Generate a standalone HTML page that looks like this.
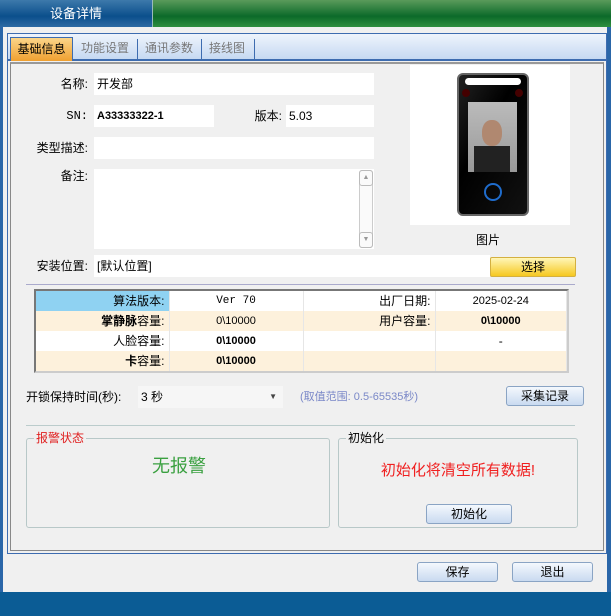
<!DOCTYPE html>
<html><head><meta charset="utf-8"><style>
*{box-sizing:border-box;margin:0;padding:0}
body{width:611px;height:616px;overflow:hidden;background:#f0f0f0;font-family:"Liberation Sans","Noto Sans CJK SC",sans-serif;font-size:12px;color:#000;position:relative}
.a{position:absolute}
.inp{position:absolute;background:#fff;height:22px;line-height:22px;padding-left:3px;font-size:12px}
.lbl{position:absolute;text-align:right;font-size:12px}
.btn{position:absolute;border:1px solid #8aa4c4;border-radius:3px;background:linear-gradient(#f4f8fd,#c9daf0);text-align:center;font-size:12px}
table{border-collapse:collapse;table-layout:fixed}
td{height:20px;line-height:18px;padding:0;vertical-align:middle;font-size:12px;border-right:1px solid #e6e6e6;overflow:hidden;white-space:nowrap}
</style></head><body>
<div class="a" style="left:0;top:0;width:611px;height:27px;background:linear-gradient(#5a9a5a,#0c6a2a 60%,#2f8f3f)"></div>
<div class="a" style="left:0;top:0;width:153px;height:27px;background:linear-gradient(#3d79ab,#0b4f8c 60%,#2d6aa4);color:#fff;font-size:13px;text-align:center;line-height:27px;border-right:1px solid #9bb">设备详情</div>
<div class="a" style="left:0;top:27px;width:3px;height:565px;background:#2a66a8"></div>
<div class="a" style="left:607px;top:27px;width:4px;height:565px;background:#2a66a8"></div>
<div class="a" style="left:0;top:592px;width:611px;height:24px;background:#0b5c95"></div>
<!-- tab panel -->
<div class="a" style="left:7px;top:33px;width:600px;height:521px;border:1px solid #3d6cb0;background:#f0f0f0"></div>
<div class="a" style="left:8px;top:34px;width:598px;height:27px;background:linear-gradient(#eef4fc,#c6d9f2);border-bottom:2px solid #3d6cb0"></div>
<div class="a" style="left:10px;top:37px;width:63px;height:24px;background:linear-gradient(#fbd58a,#f0a030);border:1px solid #3d6cb0;border-bottom:none;text-align:center;line-height:22px;font-size:12px">基础信息</div>
<div class="a" style="left:81px;top:37px;line-height:22px;color:#777">功能设置</div>
<div class="a" style="left:137px;top:39px;width:1px;height:20px;background:#3d6cb0"></div>
<div class="a" style="left:145px;top:37px;line-height:22px;color:#777">通讯参数</div>
<div class="a" style="left:201px;top:39px;width:1px;height:20px;background:#3d6cb0"></div>
<div class="a" style="left:209px;top:37px;line-height:22px;color:#777">接线图</div>
<div class="a" style="left:254px;top:39px;width:1px;height:20px;background:#3d6cb0"></div>
<div class="a" style="left:10px;top:62px;width:594px;height:489px;border:1px solid #888;border-top:2px solid #999"></div>

<div class="lbl" style="left:20px;top:73px;width:68px;line-height:22px">名称:</div>
<div class="inp" style="left:94px;top:73px;width:280px">开发部</div>
<div class="lbl" style="left:20px;top:105px;width:68px;line-height:22px;font-family:'Liberation Mono',monospace">SN:</div>
<div class="inp" style="left:94px;top:105px;width:120px;font-weight:bold;font-size:11px">A33333322-1</div>
<div class="lbl" style="left:230px;top:105px;width:52px;line-height:22px">版本:</div>
<div class="inp" style="left:286px;top:105px;width:88px">5.03</div>
<div class="lbl" style="left:10px;top:137px;width:78px;line-height:22px">类型描述:</div>
<div class="inp" style="left:94px;top:137px;width:280px"></div>
<div class="lbl" style="left:20px;top:165px;width:68px;line-height:22px">备注:</div>
<div class="inp" style="left:94px;top:169px;width:280px;height:80px"></div>
<div class="a" style="left:359px;top:170px;width:14px;height:78px;border:1px solid #ccc;border-radius:3px;background:#fafafa"></div>
<div class="a" style="left:359px;top:170px;width:14px;height:16px;border:1px solid #bbb;border-radius:3px;font-size:7px;color:#999;text-align:center;line-height:14px">▲</div>
<div class="a" style="left:359px;top:232px;width:14px;height:16px;border:1px solid #bbb;border-radius:3px;font-size:7px;color:#999;text-align:center;line-height:14px">▼</div>
<div class="lbl" style="left:10px;top:255px;width:78px;line-height:22px">安装位置:</div>
<div class="inp" style="left:94px;top:255px;width:396px">[默认位置]</div>
<div class="a" style="left:490px;top:257px;width:86px;height:20px;border:1px solid #d4b040;border-radius:2px;background:linear-gradient(#fff6b8,#f6c820);text-align:center;line-height:18px">选择</div>

<div class="a" style="left:410px;top:65px;width:160px;height:160px;background:#fff"></div>
<div class="a" style="left:457px;top:73px;width:72px;height:143px;background:linear-gradient(120deg,#222,#000 40%,#111);border-radius:6px;border:2px solid #666"></div>
<div class="a" style="left:465px;top:78px;width:56px;height:7px;background:#fff;border-radius:4px"></div>
<div class="a" style="left:462px;top:89px;width:8px;height:8px;background:#400;border-radius:50%"></div>
<div class="a" style="left:515px;top:89px;width:8px;height:8px;background:#400;border-radius:50%"></div>
<div class="a" style="left:468px;top:102px;width:49px;height:70px;background:linear-gradient(#bbb,#999)"></div>
<div class="a" style="left:482px;top:120px;width:20px;height:26px;background:#b08870;border-radius:45%"></div>
<div class="a" style="left:474px;top:146px;width:36px;height:26px;background:#222"></div>
<div class="a" style="left:484px;top:183px;width:18px;height:18px;border:2px solid #1f6ccc;border-radius:50%"></div>
<div class="a" style="left:476px;top:232px;line-height:16px">图片</div>

<div class="a" style="left:26px;top:284px;width:549px;height:1px;background:#aac"></div>
<div class="a" style="left:34px;top:289px;width:535px;height:84px;border:2px solid #777;border-right-color:#ccc;border-bottom-color:#ccc;background:#fff">
<table style="width:531px">
<tr style="background:#fff"><td style="width:133px;background:#8fd2f2;text-align:right;padding-right:4px">算法版本:</td><td style="width:134px;text-align:center;font-family:'Liberation Mono',monospace;font-size:11px">Ver 70</td><td style="width:132px;text-align:right;padding-right:4px">出厂日期:</td><td style="text-align:center;font-size:11px">2025-02-24</td></tr>
<tr style="background:#fdf1dc"><td style="text-align:right;padding-right:4px"><b>掌静脉</b>容量:</td><td style="text-align:center;font-size:11px">0\10000</td><td style="text-align:right;padding-right:4px">用户容量:</td><td style="text-align:center;font-size:11px;font-weight:bold">0\10000</td></tr>
<tr style="background:#fff"><td style="text-align:right;padding-right:4px">人脸容量:</td><td style="text-align:center;font-size:11px;font-weight:bold">0\10000</td><td></td><td style="text-align:center">-</td></tr>
<tr style="background:#fdf1dc"><td style="text-align:right;padding-right:4px"><b>卡</b>容量:</td><td style="text-align:center;font-size:11px;font-weight:bold">0\10000</td><td></td><td></td></tr>
</table></div>

<div class="a" style="left:26px;top:388px;line-height:18px">开锁保持时间(秒):</div>
<div class="a" style="left:138px;top:386px;width:145px;height:22px;background:#f6f6f6;line-height:22px;padding-left:3px">3 秒<span style="position:absolute;right:6px;font-size:8px;color:#444">▼</span></div>
<div class="a" style="left:300px;top:388px;line-height:18px;color:#7a88c8;font-size:11px">(取值范围: 0.5-65535秒)</div>
<div class="btn" style="left:506px;top:386px;width:78px;height:20px;line-height:18px">采集记录</div>
<div class="a" style="left:26px;top:425px;width:549px;height:1px;background:#bcc"></div>

<div class="a" style="left:26px;top:438px;width:304px;height:90px;border:1px solid #b8c8c8;border-radius:3px"></div>
<div class="a" style="left:34px;top:431px;background:#f0f0f0;color:#e02020;padding:0 2px;line-height:14px">报警状态</div>
<div class="a" style="left:152px;top:455px;color:#3aa040;font-size:18px;line-height:22px">无报警</div>
<div class="a" style="left:338px;top:438px;width:240px;height:90px;border:1px solid #b8c8c8;border-radius:3px"></div>
<div class="a" style="left:346px;top:431px;background:#f0f0f0;padding:0 2px;line-height:14px">初始化</div>
<div class="a" style="left:338px;top:460px;width:240px;text-align:center;color:#f02020;font-size:15px;line-height:22px">初始化将清空所有数据!</div>
<div class="btn" style="left:426px;top:504px;width:86px;height:20px;line-height:18px">初始化</div>

<div class="btn" style="left:417px;top:562px;width:81px;height:20px;line-height:18px">保存</div>
<div class="btn" style="left:512px;top:562px;width:81px;height:20px;line-height:18px">退出</div>
</body></html>
